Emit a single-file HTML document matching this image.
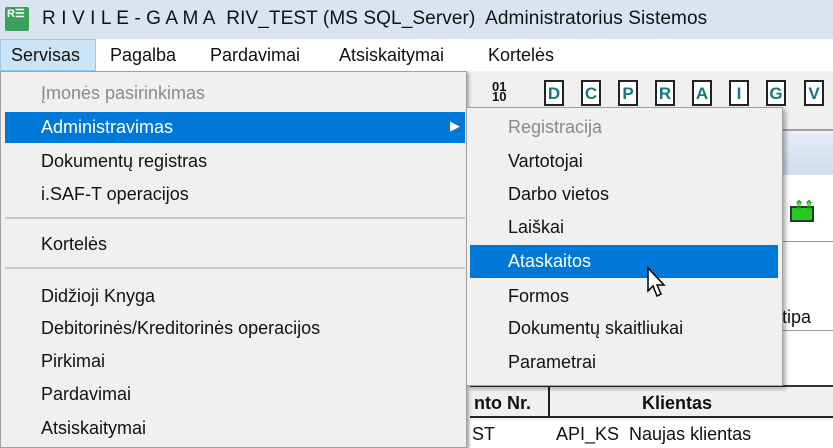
<!DOCTYPE html><html><head><style>
*{margin:0;padding:0;box-sizing:border-box}
body{width:833px;height:448px;overflow:hidden;position:relative;background:#f0f0f0;font-family:"Liberation Sans",sans-serif;font-size:18px;color:#111}
.a{position:absolute;white-space:nowrap}
.it{position:absolute;left:41px;line-height:20px}
.st{position:absolute;left:508px;line-height:20px}
.ic{position:absolute;top:80px;width:20px;height:26px;border:2px solid #222;background:#fff;color:#107a80;font-weight:bold;font-size:17px;text-align:center;line-height:24px}
</style></head><body>
<div class="a" style="left:0;top:0;width:833px;height:39px;background:#dae4f0"></div>
<div class="a" style="left:5px;top:7px;width:24px;height:24px;background:#3aa05a;border-radius:2px;color:#fff;font-size:11px;line-height:12px;padding:1px 2px;font-weight:bold">R☰</div>
<div class="a" style="left:42px;top:8px;font-size:19px;letter-spacing:0.1px">R I V I L E - G A M A&nbsp; RIV_TEST (MS SQL_Server)&nbsp; Administratorius Sistemos</div>
<div class="a" style="left:0;top:39px;width:833px;height:32px;background:#fff"></div>
<div class="a" style="left:0;top:39px;width:96px;height:32px;background:#cce4f7;border:1px solid #99c9ef"></div>
<div class="a" style="left:11px;top:45px">Servisas</div>
<div class="a" style="left:110px;top:45px">Pagalba</div>
<div class="a" style="left:210px;top:45px">Pardavimai</div>
<div class="a" style="left:339px;top:45px">Atsiskaitymai</div>
<div class="a" style="left:488px;top:45px">Kortelės</div>
<!-- right background -->
<div class="a" style="left:470px;top:71px;width:363px;height:60px;background:#f0f0f0;border-bottom:2px solid #a0a0a0"></div>
<div class="a" style="left:492px;top:82px;font-size:13px;line-height:10px;font-weight:bold">01<br>10</div>
<div class="ic" style="left:544px">D</div>
<div class="ic" style="left:581px">C</div>
<div class="ic" style="left:618px">P</div>
<div class="ic" style="left:655px">R</div>
<div class="ic" style="left:692px">A</div>
<div class="ic" style="left:729px">I</div>
<div class="ic" style="left:766px">G</div>
<div class="ic" style="left:804px">V</div>
<div class="a" style="left:470px;top:133px;width:363px;height:42px;background:linear-gradient(#e4ecf6,#cfdded)"></div>
<div class="a" style="left:470px;top:175px;width:363px;height:212px;background:#fff"></div>
<div class="a" style="left:790px;top:206px;width:24px;height:16px;background:#2c2;border:2px solid #333"></div>
<div class="a" style="left:794px;top:198px;color:#1a1;font-size:12px;font-weight:bold">⇑⇑</div>
<div class="a" style="left:470px;top:241px;width:363px;height:1px;background:#999"></div>
<div class="a" style="left:782px;top:307px">tipa</div>
<div class="a" style="left:470px;top:330px;width:363px;height:1px;background:#999"></div>
<div class="a" style="left:470px;top:385px;width:363px;height:2px;background:#333"></div>
<div class="a" style="left:470px;top:387px;width:363px;height:31px;background:#f0f0f0;border-bottom:2px solid #222"></div>
<div class="a" style="left:548px;top:387px;width:2px;height:31px;background:#222"></div>
<div class="a" style="left:474px;top:393px;font-weight:bold">nto Nr.</div>
<div class="a" style="left:642px;top:393px;font-weight:bold">Klientas</div>
<div class="a" style="left:470px;top:420px;width:363px;height:28px;background:#fff"></div>
<div class="a" style="left:472px;top:424px">ST</div>
<div class="a" style="left:556px;top:424px">API_KS&nbsp; Naujas klientas</div>
<!-- main menu -->
<div class="a" style="left:0;top:71px;width:467px;height:377px;background:#f0f0f0;border:1px solid #a0a0a0;box-shadow:2px 2px 3px rgba(0,0,0,.3)"></div>
<div class="it" style="top:83px;color:#8a8a8a">Įmonės pasirinkimas</div>
<div class="a" style="left:5px;top:112px;width:460px;height:31px;background:#0078d7"></div>
<div class="it" style="top:117px;color:#fff">Administravimas</div>
<div class="a" style="left:450px;top:118px;color:#fff;font-size:13px">▶</div>
<div class="it" style="top:151px">Dokumentų registras</div>
<div class="it" style="top:184px">i.SAF-T operacijos</div>
<div class="a" style="left:5px;top:217px;width:460px;height:2px;background:#c8c8c8"></div>
<div class="it" style="top:234px">Kortelės</div>
<div class="a" style="left:5px;top:267px;width:460px;height:2px;background:#c8c8c8"></div>
<div class="it" style="top:286px">Didžioji Knyga</div>
<div class="it" style="top:318px">Debitorinės/Kreditorinės operacijos</div>
<div class="it" style="top:351px">Pirkimai</div>
<div class="it" style="top:384px">Pardavimai</div>
<div class="it" style="top:418px">Atsiskaitymai</div>
<!-- submenu -->
<div class="a" style="left:466px;top:107px;width:317px;height:279px;background:#f0f0f0;border:1px solid #a0a0a0;box-shadow:3px 3px 4px rgba(0,0,0,.3)"></div>
<div class="st" style="top:117px;color:#8a8a8a">Registracija</div>
<div class="st" style="top:151px">Vartotojai</div>
<div class="st" style="top:184px">Darbo vietos</div>
<div class="st" style="top:217px">Laiškai</div>
<div class="a" style="left:470px;top:245px;width:308px;height:33px;background:#0078d7"></div>
<div class="st" style="top:251px;color:#fff">Ataskaitos</div>
<div class="st" style="top:286px">Formos</div>
<div class="st" style="top:318px">Dokumentų skaitliukai</div>
<div class="st" style="top:352px">Parametrai</div>
<svg class="a" style="left:647px;top:267px" width="22" height="32" viewBox="0 0 22 32"><path d="M1 1 L1 24 L6 19 L10 29 L14 27 L10 18 L17 18 Z" fill="#fff" stroke="#000" stroke-width="1.5"/></svg>
</body></html>
